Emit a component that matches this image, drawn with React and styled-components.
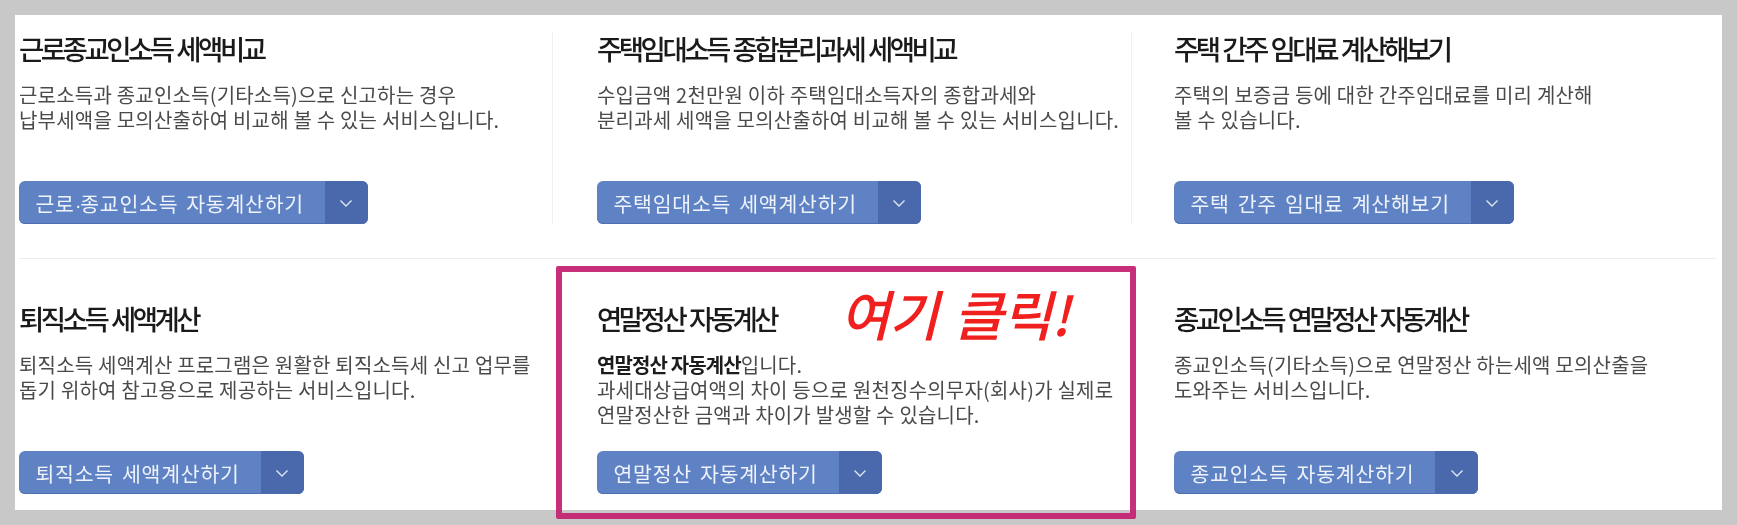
import React from "react";
import styled, { createGlobalStyle } from "styled-components";

const Global = createGlobalStyle`
  html, body { margin: 0; padding: 0; background: #c8c8c8; }
  body { font-family: "Noto Sans CJK KR", "Noto Sans", sans-serif; }
  * { box-sizing: border-box; }
`;

const Page = styled.div`
  position: relative;
  width: 1737px;
  height: 525px;
  overflow: hidden;
  padding: 15px;
  background: #c8c8c8;
`;
const Panel = styled.main`
  width: 1707px;
  height: 495px;
  background: #fff;
  padding-left: 4px;
  filter: blur(0.4px);
`;
const Row = styled.section`
  display: grid;
  grid-template-columns: 533px 579px 1fr;
  height: ${(p) => p.$height}px;
  padding: ${(p) => p.$top}px 0 ${(p) => p.$bottom}px;
  margin-right: 6px;
  border-bottom: ${(p) => (p.$rule ? "1px solid #ececec" : "none")};
`;
const Cell = styled.article`
  display: flex;
  flex-direction: column;
  align-items: flex-start;
  padding-left: ${(p) => p.$pad}px;
  border-left: ${(p) => (p.$line ? "1px solid #f0f0f0" : "none")};
`;
const Title = styled.h3`
  margin: 0 0 ${(p) => p.$gap}px;
  font-size: 27.5px;
  line-height: 32px;
  font-weight: 500;
  letter-spacing: -3.5px;
  word-spacing: 2px;
  color: #1a1a1a;
`;
const Desc = styled.p`
  margin: 0;
  font-size: 20px;
  line-height: 25px;
  font-weight: 400;
  letter-spacing: 0.2px;
  white-space: nowrap;
  color: #4a4a4a;
`;
const Strong = styled.strong`
  font-weight: 700;
  color: #1c1c1c;
  letter-spacing: -0.9px;
`;
const Btn = styled.button`
  margin-top: auto;
  display: flex;
  align-items: stretch;
  height: 43px;
  padding: 0;
  border: 0;
  border-radius: 6px;
  overflow: hidden;
  font: inherit;
  background: #5f82c4;
  box-shadow: inset 0 -1px 0 #4f70b0;
`;
const BtnLabel = styled.span`
  display: flex;
  align-items: center;
  padding: 0 21px 0 16.5px;
  font-size: 20.5px;
  letter-spacing: 0.76px;
  word-spacing: 2.6px;
  color: #eef2fa;
  white-space: nowrap;
`;
const Dot = styled.span`
  font-family: "Liberation Sans", sans-serif;
  letter-spacing: -1.4px;
`;
const BtnArrow = styled.span`
  width: 43px;
  display: flex;
  align-items: center;
  justify-content: center;
  background: #4a68ac;
  color: #dfe6f4;
`;
const Highlight = styled.div`
  position: absolute;
  left: 556px;
  top: 266px;
  width: 580px;
  height: 253px;
  border: 6.5px solid rgba(196, 36, 116, 0.95);
  border-radius: 2px;
  pointer-events: none;
`;
const Callout = styled.div`
  position: absolute;
  left: 840px;
  top: 279px;
  font-size: 54px;
  line-height: 68px;
  font-style: italic;
  font-weight: 500;
  letter-spacing: -0.7px;
  word-spacing: 4px;
  color: #f0201e;
  white-space: nowrap;
`;

const Chevron = () => (
  <svg width="18" height="18" viewBox="0 0 18 18" fill="none" stroke="currentColor" strokeWidth="1.4">
    <polyline points="3.5,6.5 9,12 14.5,6.5" />
  </svg>
);

const Card = ({ title, gap, line, pad, btn, children }) => (
  <Cell $line={line} $pad={pad}>
    <Title $gap={gap}>{title}</Title>
    <Desc>{children}</Desc>
    <Btn>
      <BtnLabel><span>{btn}</span></BtnLabel>
      <BtnArrow><Chevron /></BtnArrow>
    </Btn>
  </Cell>
);

export default function App() {
  return (
    <Page>
      <Global />
      <Panel>
        <Row $height={244} $top={17} $bottom={34} $rule>
          <Card title="근로종교인소득 세액비교" gap={18} pad={0} btn={<>근로<Dot>·</Dot>종교인소득 자동계산하기</>}>
            근로소득과 종교인소득(기타소득)으로 신고하는 경우<br />
            납부세액을 모의산출하여 비교해 볼 수 있는 서비스입니다.
          </Card>
          <Card title="주택임대소득 종합분리과세 세액비교" gap={18} line pad={44} btn="주택임대소득 세액계산하기">
            수입금액 2천만원 이하 주택임대소득자의 종합과세와<br />
            분리과세 세액을 모의산출하여 비교해 볼 수 있는 서비스입니다.
          </Card>
          <Card title="주택 간주 임대료 계산해보기" gap={18} line pad={42} btn="주택 간주 임대료 계산해보기">
            주택의 보증금 등에 대한 간주임대료를 미리 계산해<br />
            볼 수 있습니다.
          </Card>
        </Row>
        <Row $height={251} $top={43} $bottom={16}>
          <Card title="퇴직소득 세액계산" gap={18} pad={0} btn="퇴직소득 세액계산하기">
            퇴직소득 세액계산 프로그램은 원활한 퇴직소득세 신고 업무를<br />
            돕기 위하여 참고용으로 제공하는 서비스입니다.
          </Card>
          <Card title="연말정산 자동계산" gap={18} pad={45} btn="연말정산 자동계산하기">
            <Strong>연말정산 자동계산</Strong>입니다.<br />
            과세대상급여액의 차이 등으로 원천징수의무자(회사)가 실제로<br />
            연말정산한 금액과 차이가 발생할 수 있습니다.
          </Card>
          <Card title="종교인소득 연말정산 자동계산" gap={18} pad={43} btn="종교인소득 자동계산하기">
            종교인소득(기타소득)으로 연말정산 하는세액 모의산출을<br />
            도와주는 서비스입니다.
          </Card>
        </Row>
      </Panel>
      <Highlight />
      <Callout>여기 클릭!</Callout>
    </Page>
  );
}
